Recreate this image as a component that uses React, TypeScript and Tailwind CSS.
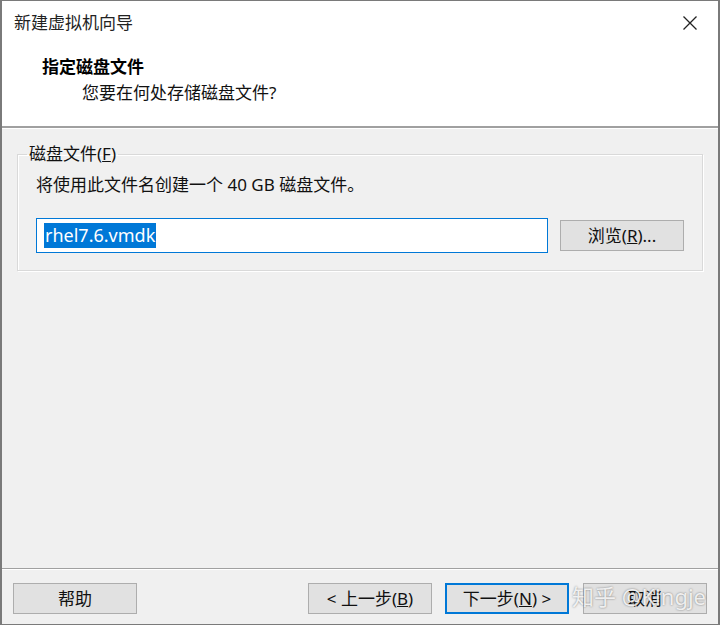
const ui = { fontFamily: '"Noto Sans", "Noto Sans CJK SC", sans-serif' };

function WinButton({
  children,
  primary,
  className = "",
}: {
  children: React.ReactNode;
  primary?: boolean;
  className?: string;
}) {
  return (
    <button
      className={
        "h-[31px] w-[124px] flex items-center justify-center bg-[#e1e1e1] text-[17px] text-[#111] leading-none " +
        (primary ? "border-2 border-[#0078d7] " : "border border-[#adadad] ") +
        className
      }
    >
      {children}
    </button>
  );
}

export default function App() {
  return (
    <div
      style={ui}
      className="relative w-[720px] h-[625px] flex flex-col bg-[#f0f0f0] border border-[#7a7a7a] border-l-2 border-r-2 overflow-hidden"
    >
      {/* title + header */}
      <div className="bg-white h-[125px] flex flex-col">
        <div className="h-[44px] flex items-center justify-between pl-[12px] pr-[16px]">
          <span className="text-[17px] text-[#222]">新建虚拟机向导</span>
          <svg width="16" height="16" viewBox="0 0 16 16" className="mr-[4px]">
            <path d="M1.5 1.5 L14.5 14.5 M14.5 1.5 L1.5 14.5" stroke="#222" strokeWidth="1.3" />
          </svg>
        </div>
        <div className="pl-[40px] pt-[10px] text-[17px] font-bold text-black leading-[24px]">
          指定磁盘文件
        </div>
        <div className="pl-[80px] pt-[2px] text-[17px] text-[#111] leading-[24px]">
          您要在何处存储磁盘文件?
        </div>
      </div>
      <div className="h-[2px] bg-[#a0a0a0]" />
      <div className="h-px bg-white" />

      {/* body */}
      <div className="flex-1 px-[15px] pt-[14px]">
        <fieldset className="border border-[#d9d9d9] shadow-[inset_1px_1px_0_#fff,1px_1px_0_#fff] rounded-none px-[18px] pb-[17px] pt-0 m-0">
          <legend className="px-[2px] -ml-[9px] text-[17px] text-[#111] leading-[22px]">
            磁盘文件(<span className="underline">F</span>)
          </legend>
          <div className="text-[17px] text-[#111] leading-[24px] mt-[8px]">
            将使用此文件名创建一个 40 GB 磁盘文件。
          </div>
          <div className="flex items-center gap-[12px] mt-[21px]">
            <div className="w-[512px] h-[35px] bg-white border border-[#0078d7] flex items-center pl-[7px]">
              <span className="bg-[#0078d7] text-white text-[18px] leading-[25px] px-px">rhel7.6.vmdk</span>
            </div>
            <WinButton className="w-[122px] h-[31px]">
              浏览(<span className="underline">R</span>)...
            </WinButton>
          </div>
        </fieldset>
      </div>

      {/* footer */}
      <div className="h-px bg-[#a0a0a0]" />
      <div className="h-px bg-white" />
      <div className="h-[54px] flex items-center px-[11px] pt-[2px]">
        <WinButton>帮助</WinButton>
        <div className="flex-1" />
        <WinButton>
          &lt; 上一步(<span className="underline">B</span>)
        </WinButton>
        <WinButton primary className="ml-[13px]">
          下一步(<span className="underline">N</span>) &gt;
        </WinButton>
        <WinButton className="ml-[14px]">取消</WinButton>
      </div>

      {/* watermark */}
      <span className="absolute left-[570px] top-[581px] whitespace-nowrap text-[22px] leading-[28px] text-white/85 [text-shadow:0_0_2px_rgba(0,0,0,0.5)] pointer-events-none">
        知乎 @Kingje
      </span>
    </div>
  );
}
